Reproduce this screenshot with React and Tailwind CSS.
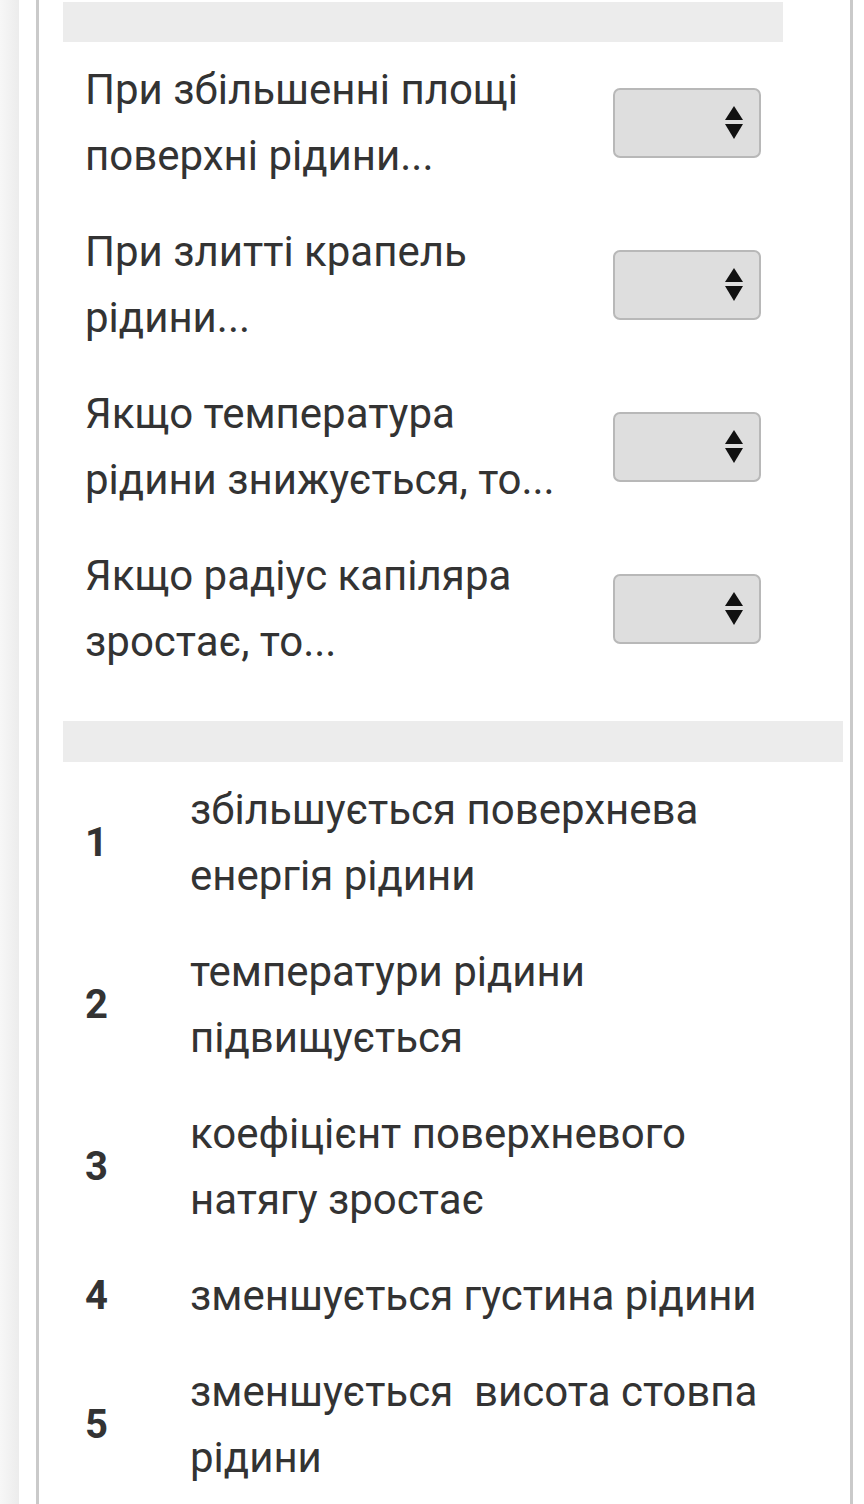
import React from 'react';

const QUESTIONS = [
  ['При збільшенні площі', 'поверхні рідини...'],
  ['При злитті крапель', 'рідини...'],
  ['Якщо температура', 'рідини знижується, то...'],
  ['Якщо радіус капіляра', 'зростає, то...'],
];

const ANSWERS = [
  { n: 1, lines: ['збільшується поверхнева', 'енергія рідини'] },
  { n: 2, lines: ['температури рідини', 'підвищується'] },
  { n: 3, lines: ['коефіцієнт поверхневого', 'натягу зростає'] },
  { n: 4, lines: ['зменшується густина рідини'] },
  { n: 5, lines: ['зменшується\u00a0 висота стовпа', 'рідини'] },
];

const SelectBox = () => (
  <div className="w-[148px] h-[70px] rounded-[7px] border-2 border-[#b8b8b8] bg-[#dedede] flex items-center justify-end pr-[15px]">
    <svg width="20" height="36" viewBox="0 0 20 36">
      <polygon points="10,1 19,15 1,15" fill="#111" />
      <polygon points="1,19 19,19 10,34" fill="#111" />
    </svg>
  </div>
);

const App = () => {
  return (
    <div className="flex w-[864px] h-[1504px] overflow-hidden bg-white font-['Roboto',sans-serif] text-[#333]">
      <div className="w-[19px] shrink-0 bg-gradient-to-r from-[#f7f7f7] to-[#ececec]" />
      <div className="w-[17px] shrink-0" />
      <div className="w-[817px] shrink-0 border-l-[3px] border-r-[3px] border-[#cacaca] pt-[2px]">
        <div className="pl-[24px] w-[744px]">
          <div className="h-[40px] bg-[#ececec]" />
          {QUESTIONS.map((q, i) => (
            <div key={i} className="flex items-center py-[15px]">
              <div className="flex-1 pl-[22px] text-[42px] leading-[66px]">
                {q.map((line) => (
                  <div key={line}>{line}</div>
                ))}
              </div>
              <div className="pr-[22px]">
                <SelectBox />
              </div>
            </div>
          ))}
        </div>
        <div className="pl-[24px] w-[804px] mt-[31px]">
          <div className="h-[41px] bg-[#ececec]" />
          {ANSWERS.map((a) => (
            <div key={a.n} className="flex items-center py-[15px]">
              <div className="w-[105px] pl-[22px] text-[40px] font-bold">{a.n}</div>
              <div className="flex-1 pl-[22px] text-[42px] leading-[66px] whitespace-nowrap">
                {a.lines.map((line) => (
                  <div key={line}>{line}</div>
                ))}
              </div>
            </div>
          ))}
        </div>
      </div>
    </div>
  );
};

export default App;
